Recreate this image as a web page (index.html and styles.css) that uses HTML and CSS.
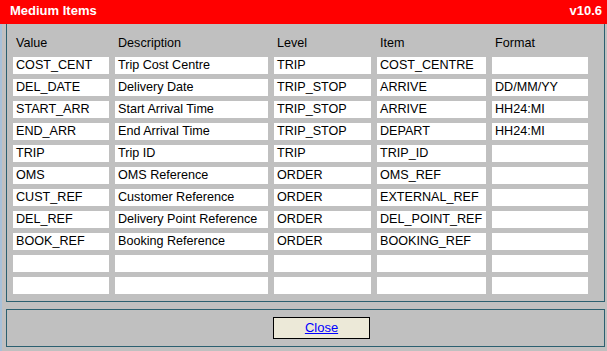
FILE: index.html
```html
<!DOCTYPE html>
<html lang="en">
<head>
    <meta charset="UTF-8">
    <meta name="viewport" content="width=device-width, initial-scale=1.0">
    <title>Medium Items</title>
    <link rel="stylesheet" href="styles.css">
</head>
<body>
    <div class="dialog">
        <div class="title-bar">
            <span class="title">Medium Items</span>
            <span class="version">v10.6</span>
        </div>

        <div class="dialog-body">
            <div class="items-box">
                <div class="items-grid head">
                    <div class="head-cell">Value</div>
                    <div class="head-cell">Description</div>
                    <div class="head-cell">Level</div>
                    <div class="head-cell">Item</div>
                    <div class="head-cell">Format</div>
                </div>
                <div class="items-grid">
                    <div class="cell">COST_CENT</div><div class="cell">Trip Cost Centre</div><div class="cell">TRIP</div><div class="cell">COST_CENTRE</div><div class="cell"></div>
                    <div class="cell">DEL_DATE</div><div class="cell">Delivery Date</div><div class="cell">TRIP_STOP</div><div class="cell">ARRIVE</div><div class="cell">DD/MM/YY</div>
                    <div class="cell">START_ARR</div><div class="cell">Start Arrival Time</div><div class="cell">TRIP_STOP</div><div class="cell">ARRIVE</div><div class="cell">HH24:MI</div>
                    <div class="cell">END_ARR</div><div class="cell">End Arrival Time</div><div class="cell">TRIP_STOP</div><div class="cell">DEPART</div><div class="cell">HH24:MI</div>
                    <div class="cell">TRIP</div><div class="cell">Trip ID</div><div class="cell">TRIP</div><div class="cell">TRIP_ID</div><div class="cell"></div>
                    <div class="cell">OMS</div><div class="cell">OMS Reference</div><div class="cell">ORDER</div><div class="cell">OMS_REF</div><div class="cell"></div>
                    <div class="cell">CUST_REF</div><div class="cell">Customer Reference</div><div class="cell">ORDER</div><div class="cell">EXTERNAL_REF</div><div class="cell"></div>
                    <div class="cell">DEL_REF</div><div class="cell">Delivery Point Reference</div><div class="cell">ORDER</div><div class="cell">DEL_POINT_REF</div><div class="cell"></div>
                    <div class="cell">BOOK_REF</div><div class="cell">Booking Reference</div><div class="cell">ORDER</div><div class="cell">BOOKING_REF</div><div class="cell"></div>
                    <div class="cell"></div><div class="cell"></div><div class="cell"></div><div class="cell"></div><div class="cell"></div>
                    <div class="cell"></div><div class="cell"></div><div class="cell"></div><div class="cell"></div><div class="cell"></div>
                </div>
            </div>

            <div class="actions-box">
                <div class="close-btn"><a href="#">Close</a></div>
            </div>
        </div>
    </div>
</body>
</html>
```

FILE: styles.css
```css
* {
  box-sizing: border-box;
}

body {
  margin: 0;
  font: 13px/15px "Liberation Sans", Arial, sans-serif;
  color: #000;
  background: #a8c0d8;
}

.dialog {
  display: flex;
  flex-direction: column;
  height: 100vh;
}

.title-bar {
  display: flex;
  justify-content: space-between;
  height: 24px;
  padding: 3px 5px 0 10px;
  background: #ff0000;
  color: #fff;
  font-weight: bold;
}

.dialog-body {
  flex: 1;
  margin-left: 2px;
  padding: 0 2px 0 4px;
  background: #c0c0c0;
}

.items-box {
  padding: 12px 0 7px 6px;
  border: 1px solid #2b6070;
  border-top: none;
  font-size: 12.6px;
}

.items-grid {
  display: grid;
  grid-template-columns: 96px 153px 97px 109px 96px;
  gap: 5px 6px;
}

.items-grid.head {
  margin-bottom: 6px;
}

.head-cell {
  padding-left: 3px;
}

.cell {
  height: 17px;
  padding: 1px 3px;
  background: #fff;
  white-space: nowrap;
  overflow: hidden;
}

.actions-box {
  margin-top: 7px;
  padding: 7px 0 7px 266px;
  border: 1px solid #2b6070;
}

.close-btn {
  width: 97px;
  height: 22px;
  line-height: 20px;
  text-align: center;
  background: #ece9d8;
  border: 1px solid #000;
}

.close-btn a {
  color: #0000ff;
}
```
